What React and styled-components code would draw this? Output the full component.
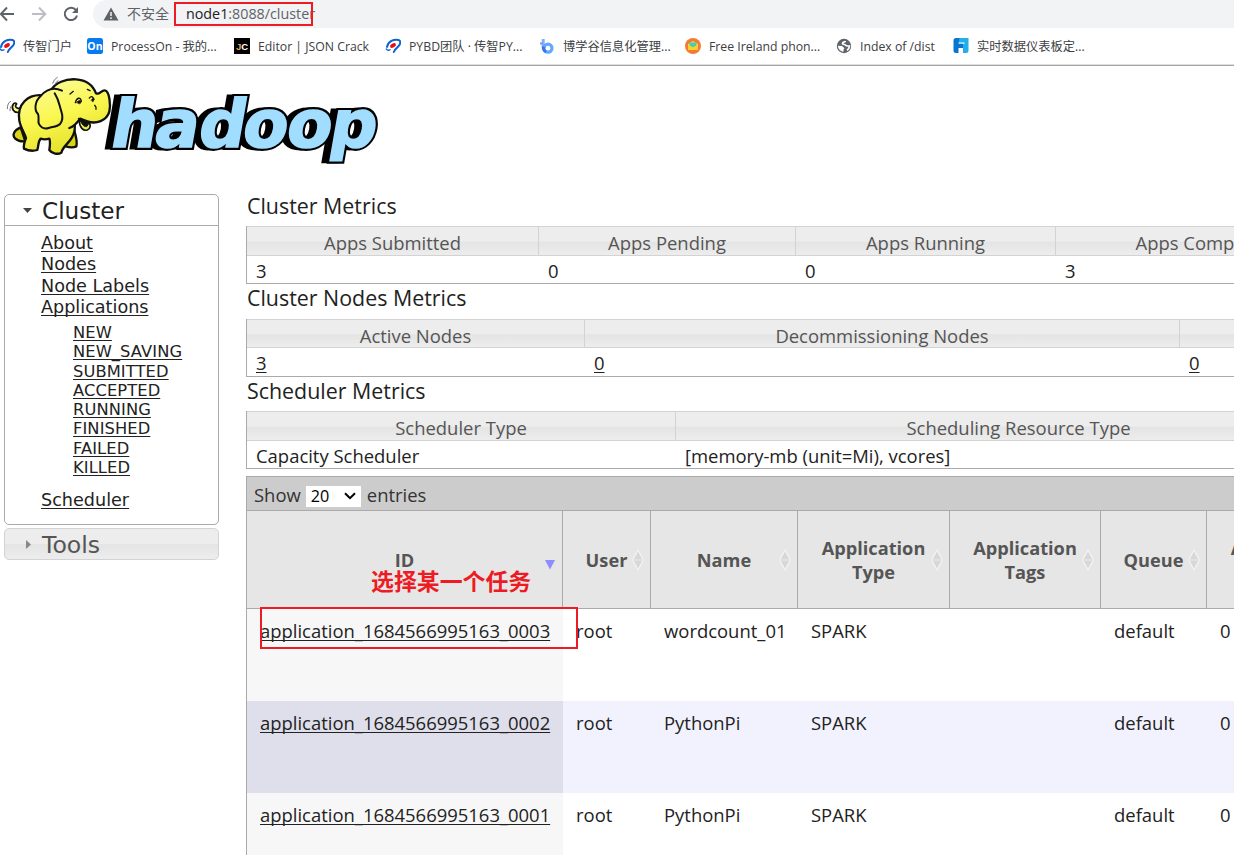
import React from 'react';
import styled, { createGlobalStyle } from 'styled-components';

const UI = '"Open Sans", "Noto Sans", "Noto Sans CJK SC", sans-serif';

const Global = createGlobalStyle`
  * { box-sizing: border-box; }
  html, body { margin: 0; background: #fff; }
  body { height: 855px; overflow: hidden; }
`;

const Page = styled.div`
  position: relative;
  width: 1234px;
  height: 855px;
  overflow: hidden;
  background: #fff;
  color: #222;
  font: 18.45px/24px ${UI};
`;

const AddressBar = styled.header`
  display: flex;
  align-items: center;
  height: 28px;
  background: #fff;
`;

const NavIcons = styled.svg`
  flex: none;
  width: 93px;
  height: 28px;
`;

const Omnibox = styled.div`
  display: flex;
  align-items: center;
  flex: 1;
  height: 28px;
  padding-left: 10px;
  border-radius: 14px 0 0 14px;
  background: #f1f3f4;
  color: #5f6368;
  font-size: 14.3px;
  line-height: 28px;
  white-space: nowrap;
`;

const Insecure = styled.span`
  margin-left: 8px;
  font-size: 14px;
`;

const Divider = styled.span`
  width: 1px;
  height: 16px;
  margin: 0 10px 0 6px;
  background: #9aa0a6;
`;

const Host = styled.span`
  color: #202124;
`;

const Bookmarks = styled.nav`
  display: flex;
  height: 38px;
  margin-left: -1px;
  border-bottom: 1px solid #a5a5a5;
  box-shadow: inset 0 -1px #dedede;
`;

const Bookmark = styled.div`
  display: flex;
  align-items: center;
  flex: none;
  gap: 8px;
  width: ${(p) => p.$w}px;
  height: 36px;
  color: #3c4043;
  font-size: 12.25px;
  white-space: nowrap;

  svg { flex: none; width: 16px; height: 16px; }
  span { padding-top: 2px; }
`;

const LogoArea = styled.div`
  height: 128px;
  padding-top: 2px;

  svg { display: block; }
`;

const Columns = styled.main`
  display: flex;
  align-items: flex-start;
  gap: 27px;
  padding-left: 4px;
`;

const Sidebar = styled.aside`
  flex: none;
  width: 215px;
  font-family: "DejaVu Sans", sans-serif;
`;

const Panel = styled.section`
  height: 331px;
  border: 1px solid #aaa;
  border-radius: 5px;
`;

const PanelTitle = styled.div`
  display: flex;
  align-items: center;
  gap: 9px;
  height: 31px;
  padding-left: 17px;
  border-bottom: 1px solid #aaa;
  font-size: 23.1px;
  line-height: 30px;

  svg { width: 11px; height: 11px; }
  span { padding-top: 2px; }
`;

const ToolsPanel = styled(PanelTitle)`
  height: 32px;
  margin-top: 3px;
  border: 1px solid #d3d3d3;
  border-radius: 5px;
  background: linear-gradient(#ededed 0 50%, #e4e4e4 52%, #ededed);
  color: #555;
  font-size: 23.6px;
`;

const Menu = styled.ul`
  margin: 0;
  padding: 7px 0 0 36px;
  list-style: none;
  font-size: 17.6px;
  line-height: 21.3px;
`;

const SubMenu = styled.ul`
  margin: 5px 0 12.5px;
  padding: 0 0 0 32px;
  list-style: none;
  font-size: 16.3px;
  letter-spacing: 0.1px;
  line-height: 19.25px;
`;

const Link = styled.a`
  color: #222;
  text-decoration: underline;
  text-decoration-thickness: 1px;
  text-underline-offset: 2px;
  text-decoration-skip-ink: none;
`;

const Content = styled.div`
  flex: none;
  width: 988px;
  overflow: hidden;
`;

const Heading = styled.h3`
  height: ${(p) => p.$h}px;
  margin: 0;
  padding-left: 1px;
  font-size: 21.4px;
  font-weight: 400;
  line-height: ${(p) => p.$lh}px;
`;

const Metrics = styled.div`
  display: grid;
  grid-template-columns: ${(p) => p.$cols};
  grid-template-rows: ${(p) => p.$rows};
  width: max-content;
  border-left: 1px solid #aaa;
  border-bottom: 1px solid #aaa;
`;

const MetricHead = styled.div`
  border: solid #d3d3d3;
  border-width: 1px 1px 1px 0;
  background: linear-gradient(#ededed 0 50%, #e4e4e4 55%, #ededed);
  color: #555;
  text-align: center;
  line-height: ${(p) => p.$lh}px;
  white-space: nowrap;
`;

const MetricValue = styled.div`
  padding-left: 9px;
  line-height: 29px;
  white-space: nowrap;
`;

const AppsTable = styled.section`
  width: 1113px;
  margin-top: 7px;
  border: 1px solid #aaa;
`;

const LengthBar = styled.div`
  display: flex;
  align-items: center;
  height: 34px;
  padding: 2px 0 0 7px;
  border-bottom: 1px solid #aaa;
  background: #ccc;
  color: #333;
`;

const LengthSelect = styled.span`
  display: flex;
  align-items: center;
  justify-content: space-between;
  width: 55px;
  height: 21px;
  margin: 3px 6px 0 5px;
  padding: 0 5px;
  background: #fff;
  color: #000;
  font-size: 16.2px;
`;

const Row = styled.div`
  display: grid;
  grid-template-columns: 316px 88px 147px 152px 151px 106px 152px;
`;

const HeadRow = styled(Row)`
  height: 98px;
  border-bottom: 1px solid #aaa;
`;

const HeadCell = styled.div`
  position: relative;
  display: flex;
  align-items: center;
  justify-content: center;
  padding: 0 24px;
  border-right: 1px solid #aaa;
  background: #e6e6e6;
  color: #555;
  font-weight: 700;
  font-size: 18.2px;
  line-height: 24px;
  text-align: center;
`;

const SortMark = styled.svg`
  position: absolute;
  right: 5px;
  top: 37px;
  width: 14px;
  height: 24px;
`;

const BodyRow = styled(Row)`
  height: 92px;
  background: ${(p) => (p.$even ? '#f2f2ff' : '#fff')};
`;

const Cell = styled.div`
  padding: 10px 0 0 13px;
  white-space: nowrap;
  background: ${(p) => p.$bg || 'transparent'};
`;

const RedBox = styled.div`
  position: absolute;
  left: ${(p) => p.$x}px;
  top: ${(p) => p.$y}px;
  width: ${(p) => p.$w}px;
  height: ${(p) => p.$h}px;
  border: 2px solid #ed1c24;
`;

const RedNote = styled.div`
  position: absolute;
  left: 371px;
  top: 565px;
  color: #ed1c24;
  font: 700 22.9px/30px "Noto Sans CJK SC", sans-serif;
`;

const Swoosh = () => (
  <svg viewBox="0 0 16 16">
    <path d="M2 9C3 3.5 9 .8 13.5 2c3 .9 1.800 4.500-.3 6.500C11.500 10.300 10 11 8.800 14" fill="none" stroke="#0f62d2" strokeWidth="2" strokeLinecap="round" />
    <path d="M1 10.500c1.200 2.500 3 2 4.500 1" fill="none" stroke="#0f62d2" strokeWidth="1.500" />
    <ellipse cx="8" cy="7.500" rx="3.200" ry="1.900" fill="#e60f1e" transform="rotate(-30 8 7.500)" />
  </svg>
);

const icons = {
  swoosh: <Swoosh />,
  on: (
    <svg viewBox="0 0 16 16">
      <rect width="16" height="16" rx="2.500" fill="#067bef" />
      <text x="8" y="12" fontSize="10.500" fontWeight="700" fill="#fff" textAnchor="middle" fontFamily="Open Sans, sans-serif">On</text>
    </svg>
  ),
  jc: (
    <svg viewBox="0 0 16 16">
      <rect width="16" height="16" fill="#000" />
      <text x="2" y="11.500" fontSize="9.500" fontWeight="700" fill="#f5a34a" fontFamily="Liberation Sans, sans-serif">J<tspan fill="#fff">C</tspan></text>
    </svg>
  ),
  b: (
    <svg viewBox="0 0 16 16">
      <path d="M4.200 1v9" fill="none" stroke="#8aabf5" strokeWidth="3" />
      <circle cx="9" cy="10.200" r="4" fill="none" stroke="#62a9fb" strokeWidth="3.200" />
      <path d="M1 5.500h3" stroke="#6f9af3" strokeWidth="2" />
      <path d="M4.300 8.500c-.3 3 .7 4.500 2.700 5.500" fill="none" stroke="#3f74ee" strokeWidth="2.800" />
    </svg>
  ),
  mail: (
    <svg viewBox="0 0 16 16">
      <circle cx="8" cy="8" r="8" fill="#f47b36" />
      <path d="M3 6l5-3 5 3v6H3z" fill="#ffd83b" />
      <path d="M4.500 4.500h7v3L8 9.500 4.500 7.500z" fill="#45cfb1" />
      <path d="M3 6.500L8 10l5-3.500V12H3z" fill="#ffd02c" />
    </svg>
  ),
  globe: (
    <svg viewBox="0 0 16 16">
      <circle cx="8" cy="8" r="7.200" fill="#5f6368" />
      <path d="M9.500 3c-.5 1.500-3 .8-3 2.400S9.300 6 9.800 7.300c.3 1 2 .5 3.700.8-.2 2-1.200 3.200-2.500 4.200" fill="none" stroke="#fff" strokeWidth="1.700" />
      <path d="M2 7.800l4 .2 2.500 2.200-1 1.300v2.200C4.300 13.500 2 11 2 7.800z" fill="#fff" />
    </svg>
  ),
  fr: (
    <svg viewBox="0 0 16 16">
      <path d="M3 0h4v15H3q-2.500 0-2.500-2.500v-10Q.5 0 3 0z" fill="#0876cf" />
      <path d="M7 0h8.500v12.500q0 2.500-2.500 2.500h-3V6H6V3q0-3 1-3z" fill="#22aee9" />
      <path d="M5.500 4.500h6v1.300h-6zM5.500 10H10v5H5.500z" fill="#fff" />
      <path d="M5.500 5.800H10V10H5.500z" fill="#0876cf" />
    </svg>
  ),
};

const bookmarks = [
  ['swoosh', '传智门户', 88],
  ['on', 'ProcessOn - 我的...', 147],
  ['jc', 'Editor | JSON Crack', 151],
  ['swoosh', 'PYBD团队 · 传智PY...', 154],
  ['b', '博学谷信息化管理...', 146],
  ['mail', 'Free Ireland phon...', 151],
  ['globe', 'Index of /dist', 117],
  ['fr', '实时数据仪表板定...', 140],
];

const letterX = '108 152 196 240 284 327';
const wordFont = { fontFamily: 'DejaVu Sans, sans-serif', fontWeight: 700, fontSize: 66 };

const HadoopLogo = () => (
  <svg width="400" height="110" viewBox="0 0 400 110">
    <defs>
      <linearGradient id="hide" gradientUnits="userSpaceOnUse" x1="120" y1="30" x2="200" y2="260">
        <stop offset="0" stopColor="#fcfca0" />
        <stop offset=".5" stopColor="#faf750" />
        <stop offset="1" stopColor="#e3df28" />
      </linearGradient>
    </defs>
    <g transform="translate(0 79) skewX(-10)" {...wordFont} strokeLinejoin="miter">
      <text x={letterX} fill="#000" stroke="#000" strokeWidth="5" transform="translate(-6 0)" aria-hidden="true">hadoop</text>
      <text x={letterX} fill="#000" stroke="#000" strokeWidth="6" aria-hidden="true">hadoop</text>
      <text x={letterX} fill="#a1ddff" stroke="#a1ddff" strokeWidth="1.600">hadoop</text>
    </g>
    <g transform="scale(.33333)" stroke="#111" strokeWidth="7" strokeLinejoin="round" strokeLinecap="round" fill="url(#hide)">
      <path d="M58 132c-16 6-26-12-18-24q6-6 10 0c-8 6 0 16 10 12" strokeWidth="5" />
      <path d="M62 178c-18 8-28 22-16 34q10 10 30 8zM222 180c2 20 12 36 7 55q-12 6-32 0l6-45z" fill="#d9d516" />
      <path d="M128 82C84 78 50 108 58 158c4 22 16 38 20 52-4 10-8 22-6 32q20 10 40 4c4-12 2-26 10-34q12 4 26 0c4 10 2 22 0 34 8 12 26 14 36 8 4-18 22-28 32-46 8-14 10-24 8-40z" />
      <path d="M238 158c0 20 12 32 24 28 10-4 10-14 6-22z" strokeWidth="5" />
      <path d="M242 156c2 12 8 20 18 20l8-12z" fill="#111" strokeWidth="3" />
      <path d="M150 84c8-34 42-52 78-50 30 2 50 16 60 42 10 6 16-10 26-9 16 2 18 48 14 64-8 28-40 38-66 29l-22-8c-8 12-18 24-32 28-40-8-66-46-58-96z" stroke="none" />
      <path d="M152 68c14-24 44-36 76-34 30 2 50 16 60 42 10 6 16-10 26-9 16 2 18 48 14 64-8 28-40 38-66 29l-22-8c-8 12-18 24-32 28" fill="none" />
      <path d="M186 68c-30-14-52 2-64 16-18 16-20 42-8 54 4 10 0 16 2 28q10 20 30 14c14-4 26-4 34-12 10-12 8-26 4-38-6-16-6-32-20-54" strokeWidth="6" />
      <path d="M226 104c4-16 16-18 18-4M268 90q8-10 14 4M210 78l10-8M284 112q6 6 4 12M262 64l8 4" fill="none" strokeWidth="4" />
      <path d="M230 103q8-10 14-2l-4 6zM274 96q4-8 8-1l-3 6z" fill="#111" strokeWidth="2" />
      <path d="M236 152q16 18 36 10" fill="none" strokeWidth="5" />
      <path d="M22 122q0-18 10-22M30 128q0-8 2-12M158 46q4-14 14-18M166 48q2-8 8-10" fill="none" stroke="#777" strokeWidth="3" />
    </g>
  </svg>
);

const SortBoth = () => (
  <SortMark viewBox="0 0 14 24">
    <path d="M7 1L13 11.500H1zM7 23L13 12.500H1z" fill="#f3f3f3" />
    <path d="M7 3.500L11.500 11.500h-9zM7 20.500L11.500 12.500h-9z" fill="#d8d8d8" />
  </SortMark>
);

const headers = ['ID', 'User', 'Name', 'Application Type', 'Application Tags', 'Queue', 'Application Priority'];

const apps = [
  ['application_1684566995163_0003', 'wordcount_01'],
  ['application_1684566995163_0002', 'PythonPi'],
  ['application_1684566995163_0001', 'PythonPi'],
];

const states = ['NEW', 'NEW_SAVING', 'SUBMITTED', 'ACCEPTED', 'RUNNING', 'FINISHED', 'FAILED', 'KILLED'];

function MetricTable({ cols, rows = '30px 27px', lh = 32, items, linked }) {
  return (
    <Metrics $cols={cols} $rows={rows}>
      {items.map(([name]) => <MetricHead key={name} $lh={lh}>{name}</MetricHead>)}
      {items.map(([name, value]) => (
        <MetricValue key={name}>{linked ? <Link>{value}</Link> : value}</MetricValue>
      ))}
    </Metrics>
  );
}

export default function App() {
  return (
    <Page>
      <Global />
      <AddressBar>
        <NavIcons viewBox="0 0 93 28" fill="none" strokeWidth="2">
          <path d="M14 14H1M7 7.500L.8 14 7 20.500" stroke="#5f6368" />
          <path d="M32 14h13M39 7.500l6.300 6.500L39 20.500" stroke="#bcbec1" />
          <path d="M76 10.200A6.200 6.200 0 1 0 77 15.500" stroke="#5f6368" />
          <path d="M78 7v6h-6z" fill="#5f6368" />
        </NavIcons>
        <Omnibox>
          <svg width="16" height="14" viewBox="0 0 16 14">
            <path d="M8 .5L15.500 13.500H.5z" fill="#5f6368" />
            <path d="M8 5v4M8 10.300v1.600" stroke="#f1f3f4" strokeWidth="1.500" />
          </svg>
          <Insecure>不安全</Insecure>
          <Divider />
          <span><Host>node1</Host>:8088/cluster</span>
        </Omnibox>
      </AddressBar>
      <Bookmarks>
        {bookmarks.map(([icon, label, w]) => (
          <Bookmark key={label} $w={w}>{icons[icon]}<span>{label}</span></Bookmark>
        ))}
      </Bookmarks>
      <LogoArea><HadoopLogo /></LogoArea>
      <Columns>
        <Sidebar>
          <Panel>
            <PanelTitle>
              <svg viewBox="0 0 11 11"><path d="M1 3h9L5.500 8z" fill="#454545" /></svg>
              <span>Cluster</span>
            </PanelTitle>
            <Menu>
              <li><Link>About</Link></li>
              <li><Link>Nodes</Link></li>
              <li><Link>Node Labels</Link></li>
              <li><Link>Applications</Link></li>
              <SubMenu>
                {states.map((s) => <li key={s}><Link>{s}</Link></li>)}
              </SubMenu>
              <li><Link>Scheduler</Link></li>
            </Menu>
          </Panel>
          <ToolsPanel>
            <svg viewBox="0 0 11 11"><path d="M4 1v9l5-4.500z" fill="#888" /></svg>
            <span>Tools</span>
          </ToolsPanel>
        </Sidebar>
        <Content>
          <Heading $h={32} $lh={24}>Cluster Metrics</Heading>
          <MetricTable
            cols="292px 257px 260px 302px"
            items={[['Apps Submitted', 3], ['Apps Pending', 0], ['Apps Running', 0], ['Apps Completed', 3]]}
          />
          <Heading $h={35} $lh={27}>Cluster Nodes Metrics</Heading>
          <MetricTable
            cols="338px 595px 400px"
            rows="29px 28px"
            lh={31}
            linked
            items={[['Active Nodes', 3], ['Decommissioning Nodes', 0], ['Decommissioned Nodes', 0]]}
          />
          <Heading $h={34} $lh={27}>Scheduler Metrics</Heading>
          <MetricTable
            cols="429px 686px"
            items={[['Scheduler Type', 'Capacity Scheduler'], ['Scheduling Resource Type', '[memory-mb (unit=Mi), vcores]']]}
          />
          <AppsTable>
            <LengthBar>
              Show
              <LengthSelect>
                20
                <svg width="12" height="8" viewBox="0 0 12 8"><path d="M1 1.200l5 5 5-5" fill="none" stroke="#000" strokeWidth="2" /></svg>
              </LengthSelect>
              entries
            </LengthBar>
            <HeadRow>
              {headers.map((h, i) => (
                <HeadCell key={h}>
                  {h}
                  {i === 0 ? (
                    <SortMark viewBox="0 0 14 24"><path d="M2 12h10L7 21.500z" fill="#8d8dff" /></SortMark>
                  ) : <SortBoth />}
                </HeadCell>
              ))}
            </HeadRow>
            {apps.map(([id, name], i) => (
              <BodyRow key={id} $even={i === 1}>
                <Cell $bg={i === 1 ? '#dfdfeb' : '#f7f7f7'}><Link>{id}</Link></Cell>
                <Cell>root</Cell>
                <Cell>{name}</Cell>
                <Cell>SPARK</Cell>
                <Cell />
                <Cell>default</Cell>
                <Cell>0</Cell>
              </BodyRow>
            ))}
          </AppsTable>
        </Content>
      </Columns>
      <RedBox $x={174} $y={2} $w={139} $h={24} />
      <RedBox $x={260} $y={607} $w={318} $h={42} />
      <RedNote>选择某一个任务</RedNote>
    </Page>
  );
}
